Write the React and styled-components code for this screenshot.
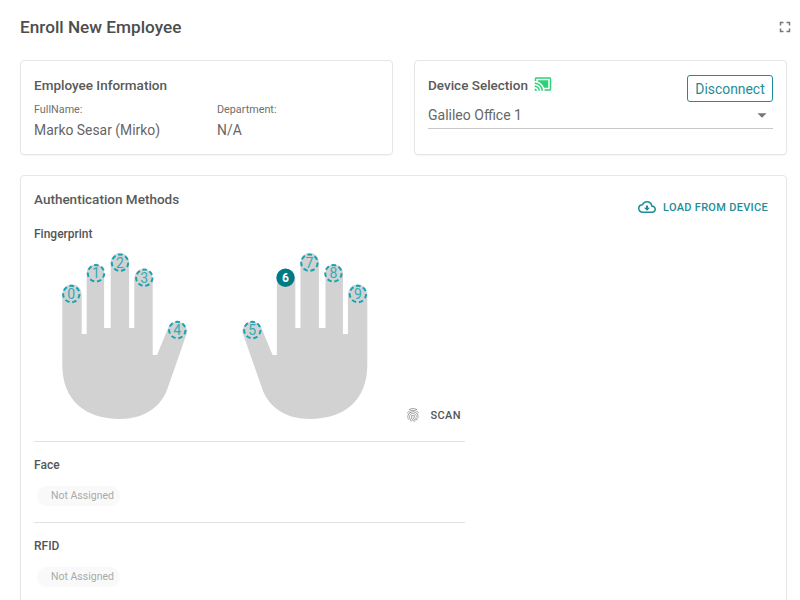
import React from "react";
import styled, {createGlobalStyle} from "styled-components";
import {MdCastConnected, MdFullscreen, MdOutlineCloudDownload, MdFingerprint, MdArrowDropDown} from "react-icons/md";

const teal = "#1f8d99";

const GlobalStyle = createGlobalStyle`
    html, body {
        margin: 0;
        height: 600px;
        overflow: hidden;
        background: #fff;
    }
    body {
        font-family: Roboto, "Liberation Sans", sans-serif;
        color: #555;
    }
`;

const Page = styled.div`
    padding: 16px 13px 0 20px;
`;

const Header = styled.div`
    display: flex;
    align-items: center;
    justify-content: space-between;
    height: 22px;
    margin-bottom: 22px;
`;

const Title = styled.h1`
    margin: 0;
    font-size: 17.2px;
    font-weight: 500;
    line-height: 22px;
    color: #4d4d4d;
`;

const ExpandIcon = styled(MdFullscreen)`
    font-size: 18px;
    color: #777;
    margin-right: -7px;
`;

const TopRow = styled.div`
    display: grid;
    grid-template-columns: 373px 373px;
    gap: 21px;
    margin-bottom: 20px;
`;

const Card = styled.section`
    box-sizing: border-box;
    background: #fff;
    border: 1px solid #e6e6e6;
    border-radius: 4px;
    box-shadow: 0 1px 1px rgba(0, 0, 0, 0.04);
    padding: ${props => props.$padding || "14px"};
    height: ${props => props.$height || "auto"};
`;

const CardTitle = styled.h2`
    margin: 0;
    font-size: 13.5px;
    font-weight: 500;
    line-height: 20px;
    color: #5a5a5a;
`;

const InfoGrid = styled.div`
    display: grid;
    grid-template-columns: 183px 1fr;
    margin-top: 8px;
`;

const Label = styled.div`
    font-size: 10.8px;
    line-height: 14px;
    color: #707070;
`;

const Value = styled.div`
    font-size: 13.9px;
    line-height: 20px;
    margin-top: 3px;
    color: #666;
`;

const DeviceHead = styled.div`
    display: flex;
    align-items: flex-start;
    justify-content: space-between;
`;

const DeviceTitle = styled.div`
    display: flex;
    align-items: center;
    gap: 6px;
`;

const CastIcon = styled(MdCastConnected)`
    font-size: 18px;
    color: #2fd07a;
    margin-top: -3px;
`;

const OutlineButton = styled.button`
    box-sizing: border-box;
    width: 86px;
    height: 27px;
    padding: 0;
    background: #fff;
    border: 1px solid ${teal};
    border-radius: 3px;
    font-family: inherit;
    font-size: 13.9px;
    color: ${teal};
`;

const Select = styled.div`
    display: flex;
    align-items: center;
    justify-content: space-between;
    height: 26px;
    border-bottom: 1px solid #c8c8c8;
    font-size: 14px;
    color: #666;
`;

const ArrowIcon = styled(MdArrowDropDown)`
    font-size: 22px;
    color: #777;
`;

const AuthHead = styled.div`
    display: flex;
    align-items: flex-start;
    justify-content: space-between;
`;

const LoadButton = styled.div`
    display: flex;
    align-items: center;
    gap: 7px;
    margin: 9px 4px 0 0;
    font-size: 11px;
    font-weight: 500;
    letter-spacing: 0.3px;
    color: ${teal};
`;

const CloudIcon = styled(MdOutlineCloudDownload)`
    font-size: 18px;
`;

const Methods = styled.div`
    width: 431px;
`;

const MethodTitle = styled.h3`
    margin: 0;
    font-size: 12px;
    font-weight: 500;
    line-height: 16px;
    color: #555;
`;

const FingerprintBlock = styled.div`
    margin-top: 10px;
    border-bottom: 1px solid #e2e2e2;
`;

const HandRow = styled.div`
    display: flex;
    padding: 6px 4px 18px 24px;
`;

const HandSvg = styled.svg`
    display: block;
    flex: none;
    width: 130px;
    height: 175px;
    margin-right: ${props => props.$gap || 0}px;
`;

const ScanButton = styled.div`
    display: flex;
    align-items: center;
    gap: 9px;
    align-self: flex-end;
    margin-left: auto;
    font-size: 11px;
    font-weight: 500;
    letter-spacing: 0.4px;
    color: #555;
`;

const ScanIcon = styled(MdFingerprint)`
    font-size: 16px;
    color: #888;
`;

const Method = styled.div`
    padding: 15px 0 16px;
    border-bottom: ${props => props.$last ? "none" : "1px solid #e2e2e2"};
`;

const Chip = styled.div`
    box-sizing: border-box;
    width: 83px;
    height: 20px;
    margin: 13px 0 0 3px;
    padding-left: 14px;
    border-radius: 10px;
    background: #f9f9f9;
    font-size: 10.5px;
    line-height: 20px;
    color: #aaa;
`;

const Palm = styled.path`
    fill: #d2d2d2;
`;

const FingerRing = styled.circle`
    fill: ${props => props.$active ? "#007b85" : "none"};
    stroke: ${props => props.$active ? "#007b85" : "#12a5b1"};
    stroke-width: 2;
    stroke-dasharray: ${props => props.$active ? "none" : "4.5 2.8"};
`;

const FingerNumber = styled.text`
    font-family: Roboto, "Liberation Sans", sans-serif;
    font-size: ${props => props.$active ? 12 : 14}px;
    font-weight: ${props => props.$active ? 700 : 400};
    fill: ${props => props.$active ? "#fff" : "#35abb6"};
    text-anchor: middle;
    dominant-baseline: central;
`;

const handPath = "M62.3 294a9.2 9.2 0 0 1 19.4 0V334H86.7V273a8.7 8.7 0 0 1 17.4 0V328H110.7V262a9.2 9.2 0 0 1 18.4 0V328H134.3V278a9.2 9.2 0 0 1 18.4 0V355H157L169 326a9.4 9.4 0 0 1 16.5 11L167 390C160 408 143 419 120 419C85 419 62.3 400 62.3 365Z";

const leftFingers = [
    {id: 0, x: 71.3, y: 294},
    {id: 1, x: 96, y: 273.3},
    {id: 2, x: 120, y: 262.7},
    {id: 3, x: 144.3, y: 277.7},
    {id: 4, x: 177.3, y: 330}
];

const rightFingers = [
    {id: 5, x: 252.3, y: 330},
    {id: 6, x: 285.5, y: 277.7, active: true},
    {id: 7, x: 309.4, y: 262.7},
    {id: 8, x: 333.4, y: 273.3},
    {id: 9, x: 357.9, y: 294}
];

const Hand = ({fingers, left, mirrored, gap}) => (
    <HandSvg viewBox={`${left} 248 130 175`} $gap={gap}>
        <Palm d={handPath} transform={mirrored ? "translate(429.6 0) scale(-1 1)" : undefined}/>
        {fingers.map(finger => (
            <g key={finger.id}>
                <FingerRing cx={finger.x} cy={finger.y} r="8.2" $active={finger.active}/>
                <FingerNumber x={finger.x} y={finger.y} $active={finger.active}>{finger.id}</FingerNumber>
            </g>
        ))}
    </HandSvg>
);

export default function App() {
    return (
        <Page>
            <GlobalStyle/>
            <Header>
                <Title>Enroll New Employee</Title>
                <ExpandIcon/>
            </Header>

            <TopRow>
                <Card $height="95px" $padding="14px 13px">
                    <CardTitle>Employee Information</CardTitle>
                    <InfoGrid>
                        <div>
                            <Label>FullName:</Label>
                            <Value>Marko Sesar (Mirko)</Value>
                        </div>
                        <div>
                            <Label>Department:</Label>
                            <Value>N/A</Value>
                        </div>
                    </InfoGrid>
                </Card>

                <Card $height="95px" $padding="14px 13px 0">
                    <DeviceHead>
                        <DeviceTitle>
                            <CardTitle>Device Selection</CardTitle>
                            <CastIcon/>
                        </DeviceTitle>
                        <OutlineButton>Disconnect</OutlineButton>
                    </DeviceHead>
                    <Select>
                        Galileo Office 1
                        <ArrowIcon/>
                    </Select>
                </Card>
            </TopRow>

            <Card $padding="13px 14px 0 13px">
                <AuthHead>
                    <CardTitle>Authentication Methods</CardTitle>
                    <LoadButton>
                        <CloudIcon/>
                        LOAD FROM DEVICE
                    </LoadButton>
                </AuthHead>
                <Methods>
                    <FingerprintBlock>
                        <MethodTitle>Fingerprint</MethodTitle>
                        <HandRow>
                            <Hand fingers={leftFingers} left={58} gap={54}/>
                            <Hand fingers={rightFingers} left={242} mirrored/>
                            <ScanButton>
                                <ScanIcon/>
                                SCAN
                            </ScanButton>
                        </HandRow>
                    </FingerprintBlock>
                    <Method>
                        <MethodTitle>Face</MethodTitle>
                        <Chip>Not Assigned</Chip>
                    </Method>
                    <Method $last>
                        <MethodTitle>RFID</MethodTitle>
                        <Chip>Not Assigned</Chip>
                    </Method>
                </Methods>
            </Card>
        </Page>
    );
}
